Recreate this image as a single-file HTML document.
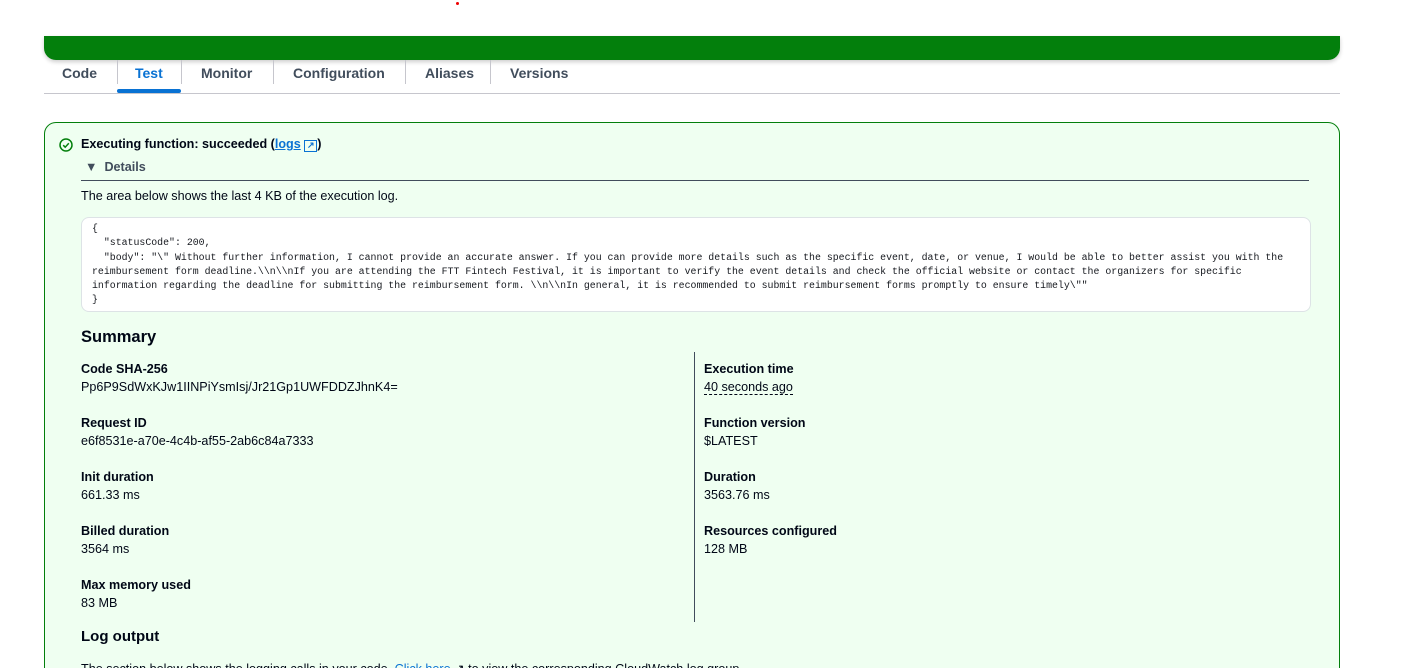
<!DOCTYPE html>
<html><head><meta charset="utf-8"><style>
html,body{margin:0;width:1415px;height:668px;overflow:hidden}
body{background:#fff;font-family:"Liberation Sans",sans-serif;color:#000716;position:relative}
.green{position:absolute;left:44px;top:36px;width:1296px;height:24px;background:#037f0c;border-radius:0 0 12px 12px;box-shadow:0 2px 4px rgba(0,0,0,.2)}
.dot{position:absolute;left:456px;top:2px;width:3px;height:3px;background:#e00;border-radius:50%}
.tabs{position:absolute;left:44px;top:60px;width:1296px;height:33px;border-bottom:1px solid #c6c6cd}
.tab{position:absolute;top:5px;font-size:14px;font-weight:bold;color:#414d5c}
.sep{position:absolute;top:0;width:1px;height:24px;background:#c6c6cd}
.ul{position:absolute;left:117px;top:89px;width:64px;height:4px;background:#0972d3;border-radius:2px}
.box{position:absolute;left:44px;top:122px;width:1294px;height:600px;background:#effff1;border:1px solid #037f0c;border-radius:12px}
.a{position:absolute;font-size:12.6px;white-space:nowrap}
.b{font-weight:bold}
pre{position:absolute;left:81px;top:217px;width:1218px;height:89px;margin:0;padding:4px 0 0 10px;background:#fff;border:1px solid #dde3e6;border-radius:8px;font-family:"Liberation Mono",monospace;font-size:9.9px;line-height:14.3px;color:#16191f}
h2{position:absolute;margin:0;font-size:16.5px;font-weight:bold}
</style></head><body>
<div class="dot"></div>
<div class="green"></div>
<div class="tabs">
<span class="tab" style="left:18px">Code</span><div class="sep" style="left:73px"></div>
<span class="tab" style="left:91px;color:#0972d3">Test</span><div class="sep" style="left:137px"></div>
<span class="tab" style="left:157px">Monitor</span><div class="sep" style="left:229px"></div>
<span class="tab" style="left:249px">Configuration</span><div class="sep" style="left:361px"></div>
<span class="tab" style="left:381px">Aliases</span><div class="sep" style="left:446px"></div>
<span class="tab" style="left:466px">Versions</span>
</div>
<div class="ul"></div>
<div class="box"></div>
<svg style="position:absolute;left:59px;top:138px" width="14" height="14" viewBox="0 0 14 14"><circle cx="7" cy="7" r="6" fill="none" stroke="#037f0c" stroke-width="1.5"/><path d="M4.2 7.2l2 2 3.6-4" fill="none" stroke="#037f0c" stroke-width="1.5"/></svg>
<div class="a b" style="left:81px;top:137px">Executing function: succeeded (<span style="color:#0972d3;text-decoration:underline">logs</span> <span style="color:#0972d3;display:inline-block;width:11px;height:10px;border:1.5px solid #0972d3;font-size:9px;line-height:9px;text-align:center">↗</span>)</div>
<div class="a b" style="left:85px;top:160px;color:#414d5c">▼&nbsp; Details</div>
<div style="position:absolute;left:81px;top:180px;width:1228px;height:1px;background:#414d5c"></div>
<div class="a" style="left:81px;top:189px">The area below shows the last 4 KB of the execution log.</div>
<pre>{
  "statusCode": 200,
  "body": "\" Without further information, I cannot provide an accurate answer. If you can provide more details such as the specific event, date, or venue, I would be able to better assist you with the
reimbursement form deadline.\\n\\nIf you are attending the FTT Fintech Festival, it is important to verify the event details and check the official website or contact the organizers for specific
information regarding the deadline for submitting the reimbursement form. \\n\\nIn general, it is recommended to submit reimbursement forms promptly to ensure timely\""
}</pre>
<h2 style="left:81px;top:328px">Summary</h2>
<div style="position:absolute;left:694px;top:352px;width:1px;height:270px;background:#414d5c"></div>
<div class="a b" style="left:81px;top:362px">Code SHA-256</div><div class="a" style="left:81px;top:380px">Pp6P9SdWxKJw1IINPiYsmIsj/Jr21Gp1UWFDDZJhnK4=</div>
<div class="a b" style="left:81px;top:416px">Request ID</div><div class="a" style="left:81px;top:434px">e6f8531e-a70e-4c4b-af55-2ab6c84a7333</div>
<div class="a b" style="left:81px;top:470px">Init duration</div><div class="a" style="left:81px;top:488px">661.33 ms</div>
<div class="a b" style="left:81px;top:524px">Billed duration</div><div class="a" style="left:81px;top:542px">3564 ms</div>
<div class="a b" style="left:81px;top:578px">Max memory used</div><div class="a" style="left:81px;top:596px">83 MB</div>
<div class="a b" style="left:704px;top:362px">Execution time</div><div class="a" style="left:704px;top:380px;border-bottom:1px dashed #000716">40 seconds ago</div>
<div class="a b" style="left:704px;top:416px">Function version</div><div class="a" style="left:704px;top:434px">$LATEST</div>
<div class="a b" style="left:704px;top:470px">Duration</div><div class="a" style="left:704px;top:488px">3563.76 ms</div>
<div class="a b" style="left:704px;top:524px">Resources configured</div><div class="a" style="left:704px;top:542px">128 MB</div>
<h2 style="left:81px;top:628px;font-size:15px">Log output</h2>
<div class="a" style="left:81px;top:661px">The section below shows the logging calls in your code. <span style="color:#0972d3;text-decoration:underline">Click here</span> ↗ to view the corresponding CloudWatch log group.</div>
</body></html>
